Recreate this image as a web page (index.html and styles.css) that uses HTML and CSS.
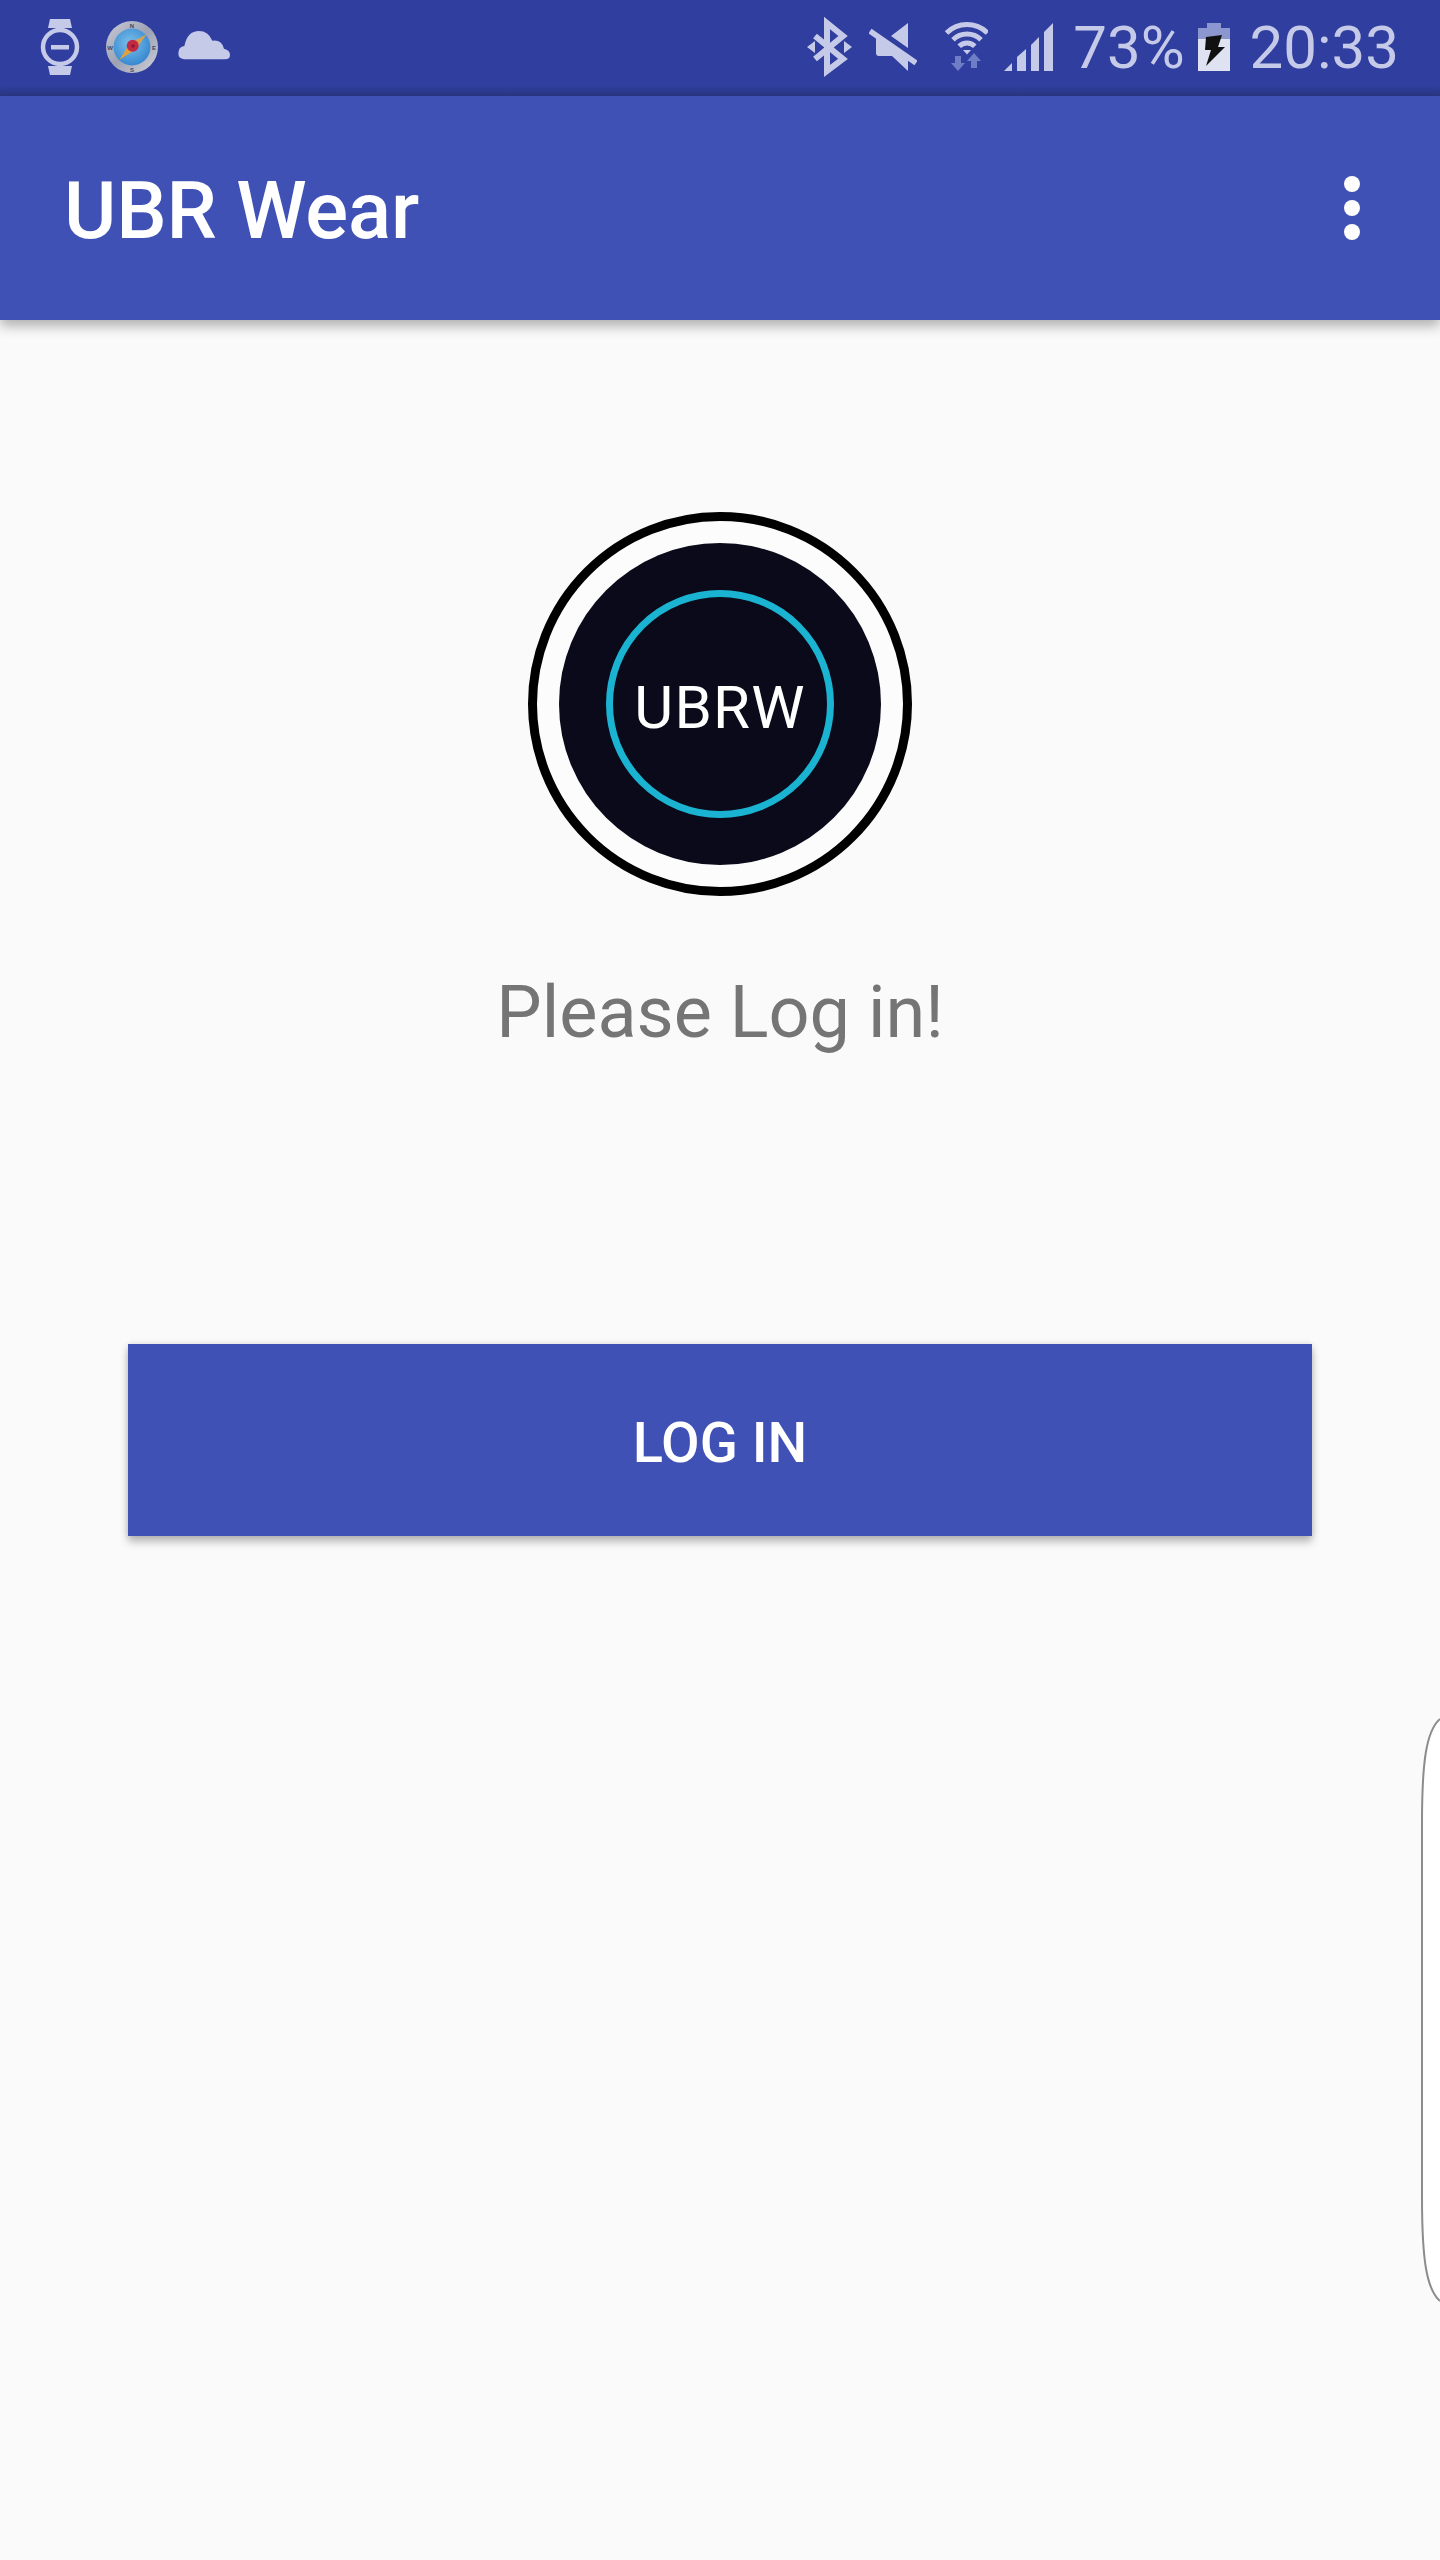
FILE: index.html
```html
<!DOCTYPE html>
<html lang="en">
<head>
<meta charset="utf-8">
<title>UBR Wear</title>
<link rel="stylesheet" href="styles.css">
</head>
<body>
<div class="screen">
  <header class="status-bar">
    <div class="status-left">
      <svg class="ico ico-watch" viewBox="40 0 40 96"><path class="glyph" d="M50 19h20l2 9H48zM48 66h24l-2 9H50z"/><circle cx="60" cy="47" r="17" fill="none" stroke="#c5cae9" stroke-width="4.5"/><rect class="glyph" x="51" y="45" width="18" height="4.5"/></svg>
      <svg class="ico ico-compass" viewBox="106 0 52 96">
        <defs>
          <linearGradient id="rim" x1="0" y1="0" x2="1" y2="1"><stop offset="0" stop-color="#c9ccd6"/><stop offset=".5" stop-color="#9da2b4"/><stop offset="1" stop-color="#cfd2dc"/></linearGradient>
          <radialGradient id="sea" cx=".45" cy=".4" r=".7"><stop offset="0" stop-color="#7cc0ea"/><stop offset="1" stop-color="#2a7fcc"/></radialGradient>
        </defs>
        <circle cx="132" cy="47" r="26" fill="url(#rim)"/>
        <circle cx="132" cy="47" r="18.5" fill="url(#sea)"/>
        <path d="M146.700 34.300L136 49l-6-6z" fill="#d8a050"/>
        <path d="M119.300 60L130 43l6 6z" fill="#e2a03c"/>
        <circle cx="132.700" cy="45.700" r="6" fill="#c22a44"/>
        <circle cx="133" cy="46" r="1.8" fill="#8a1c30"/>
        <text class="compass-letter" x="132" y="28">N</text>
        <text class="compass-letter" x="154" y="50">E</text>
        <text class="compass-letter" x="132" y="72">S</text>
        <text class="compass-letter" x="110" y="50">W</text>
      </svg>
      <svg class="ico ico-cloud" viewBox="534 0 157 288"><path class="glyph" d="M552 178Q535 176 535 160Q535 141 553 138Q562 93 597 93Q625 93 637 122Q665 118 672 146Q690 150 690 165Q690 178 675 178Z"/></svg>
    </div>
    <div class="status-right">
      <svg class="ico ico-bt" viewBox="806 0 47 96"><path d="M815 36l28 23-16 12V23l16 13-28 23" fill="none" stroke="#c5cae9" stroke-width="6"/><path class="glyph" d="M807 47l8-6v12zM852 47l-8-6v12z"/></svg>
      <svg class="ico ico-mute" viewBox="869 0 48 96"><path class="glyph" d="M908 23v25l-17-12zM876 38l32 22v11L892 56H879q-3 0-3-3z"/><path d="M870 31l46 32" stroke="#c5cae9" stroke-width="5.500"/></svg>
      <svg class="ico ico-wifi" viewBox="945 0 43 96">
        <path d="M946.500 33A29 29 0 0 1 987.500 33M953 39.700A20 20 0 0 1 981 39.700M959.200 46.200A11 11 0 0 1 974.800 46.200" fill="none" stroke="#c5cae9" stroke-width="5"/>
        <path class="glyph" d="M963 50h8l-4 4.500z"/>
        <path class="wifi-arrow" d="M955 56h6v7h4l-7 8-7-8h4zM971 68v-7h-4l7-8 7 8h-4v7z"/>
      </svg>
      <svg class="ico ico-signal" viewBox="1004 0 49 96"><path class="glyph" d="M1004 71l8-8v8zM1017 71V57l9-8v22zM1031 71V45l8-8v34zM1044 71V32l9-9v48z"/></svg>
      <span class="status-pct">73%</span>
      <svg class="ico ico-batt" viewBox="1197 0 32 96"><path class="batt-top" d="M1206 23h14v5h9v11h-32V28h9z"/><rect class="batt-fill" x="1197" y="39" width="32" height="32"/><path d="M1205 37l16-2-4 12h7l-19 19 5-16h-6z" fill="#111"/></svg>
      <span class="status-time">20:33</span>
    </div>
  </header>
  <div class="app-bar">
    <h1 class="app-title">UBR Wear</h1>
    <div class="kebab"><span class="dot"></span><span class="dot"></span><span class="dot"></span></div>
  </div>
  <main class="content">
    <svg class="logo" viewBox="0 0 384 384">
      <circle cx="192" cy="192" r="187.500" fill="#fcfcfc" stroke="#000" stroke-width="9"/>
      <circle cx="192" cy="192" r="161" fill="#0a0a1a"/>
      <circle cx="192" cy="192" r="110.500" fill="none" stroke="#1ab3d1" stroke-width="7"/>
      <text class="logo-text" x="192" y="216">UBRW</text>
    </svg>
    <p class="prompt">Please Log in!</p>
    <button class="login-btn" type="button">LOG IN</button>
  </main>
  <svg class="edge-handle" viewBox="0 0 20 586"><path d="M20 2C6 14 2 46 2 106V480C2 540 6 572 20 584Z" fill="#fff"/><path d="M20 2C6 14 2 46 2 106V480C2 540 6 572 20 584" fill="none" stroke="#8c8c8c" stroke-width="2"/></svg>
</div>
</body>
</html>
```

FILE: styles.css
```css
* { box-sizing: border-box; }
html, body { margin: 0; padding: 0; }
body { background: #fafafa; font-family: Roboto, "Liberation Sans", sans-serif; }
.screen { position: relative; width: 1440px; height: 2560px; overflow: hidden; background: #fafafa; }

.status-bar {
  height: 96px; display: flex; justify-content: space-between;
  background: linear-gradient(#303f9f 0, #303f9f 84px, #2b3785 96px);
  color: #c5cae9;
}
.status-left, .status-right { display: flex; align-items: center; height: 96px; }
.status-left { padding-left: 40px; }
.status-right { padding-right: 41px; }
.ico { display: block; height: 96px; flex: none; }
.glyph { fill: #c5cae9; }
.ico-watch { width: 40px; }
.ico-compass { width: 52px; margin-left: 26px; }
.ico-cloud { width: 52.33px; margin-left: 20px; }
.ico-bt { width: 47px; }
.ico-mute { width: 48px; margin-left: 16px; }
.ico-wifi { width: 43px; margin-left: 28px; }
.ico-signal { width: 49px; margin-left: 16px; }
.ico-batt { width: 32px; margin-left: 13px; }
.wifi-arrow { fill: #6f7cc6; }
.batt-top { fill: #8c96cf; }
.batt-fill { fill: #dfe2f1; }
.compass-letter { font: 700 6px "Liberation Sans", sans-serif; fill: #3f4660; text-anchor: middle; }
.status-pct, .status-time { font-size: 60px; line-height: 96px; letter-spacing: 0; }
.status-pct { margin-left: 20px; }
.status-time { margin-left: 20px; }

.app-bar {
  position: relative; height: 224px; display: flex; align-items: center; justify-content: space-between;
  padding: 0 80px 0 64px; background: #3f51b5;
  box-shadow: 0 6px 12px rgba(0,0,0,.3);
}
.app-title { margin: 6px 0 0; font-size: 80px; font-weight: 500; line-height: 96px; color: #fff; letter-spacing: -.2px; }
.kebab { display: flex; flex-direction: column; gap: 8px; }
.dot { display: block; width: 16px; height: 16px; border-radius: 50%; background: #fff; }

.content { display: flex; flex-direction: column; align-items: center; padding-top: 192px; }
.logo { display: block; width: 384px; height: 384px; }
.logo-text { font: 400 60px Roboto, sans-serif; fill: #fff; text-anchor: middle; letter-spacing: 1.2px; }
.prompt { margin: 65px 0 0; font-size: 72px; line-height: 104px; color: #757575; }
.login-btn {
  width: 1184px; height: 192px; margin-top: 279px; border: 0; border-radius: 0; padding: 6px 0 0;
  background: #3f51b5; color: #fff; font: 500 56px Roboto, sans-serif;
  box-shadow: 0 6px 8px rgba(0,0,0,.25), 0 0 6px rgba(0,0,0,.12);
}
.edge-handle { position: absolute; right: 0; top: 1717px; width: 20px; height: 586px; }
```
